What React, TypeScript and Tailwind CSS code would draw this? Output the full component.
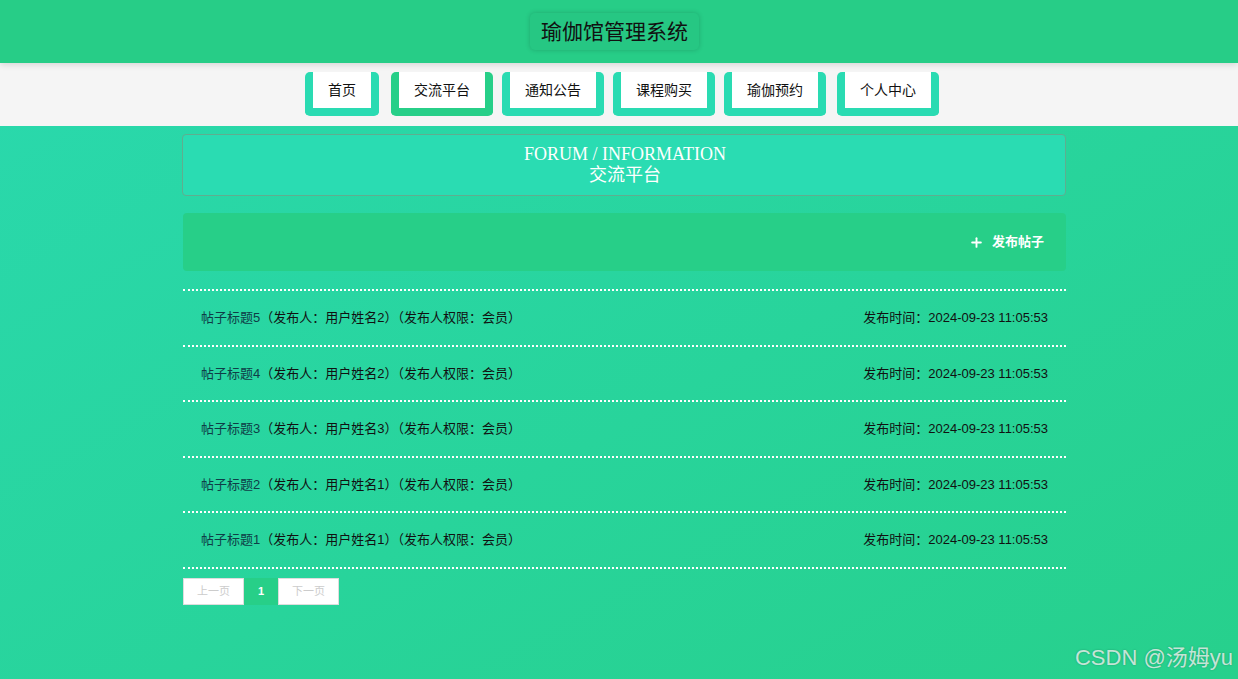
import { Plus } from "lucide-react";

const navItems = [
  { label: "首页", gap: "ml-0" },
  { label: "交流平台", gap: "ml-[12px]" },
  { label: "通知公告", gap: "ml-[9px]" },
  { label: "课程购买", gap: "ml-[9px]" },
  { label: "瑜伽预约", gap: "ml-[9px]" },
  { label: "个人中心", gap: "ml-[11px]" },
];

const posts = [
  { title: "帖子标题5", name: "用户姓名2" },
  { title: "帖子标题4", name: "用户姓名2" },
  { title: "帖子标题3", name: "用户姓名3" },
  { title: "帖子标题2", name: "用户姓名1" },
  { title: "帖子标题1", name: "用户姓名1" },
];

const sans = "font-['Liberation_Sans','Noto_Sans_CJK_SC',sans-serif]";

export default function App() {
  return (
    <div
      className={`relative min-h-screen bg-gradient-to-br from-[#2ad9ae] to-[#27d08c] ${sans}`}
    >
      {/* 顶部标题 */}
      <header className="relative z-10 flex h-[63px] items-center justify-center bg-[#27cd87] shadow-[0_2px_6px_rgba(0,0,0,0.12)]">
        <div className="mr-[9px] rounded-[5px] bg-[#26c783] px-[11px] py-[5px] text-[21px] leading-[27px] text-[#111] shadow-[0_0_5px_rgba(0,0,0,0.18)]">
          瑜伽馆管理系统
        </div>
      </header>

      {/* 导航 */}
      <nav className="flex h-[63px] items-start bg-[#f5f5f5] pl-[305px] pt-[9px]">
        {navItems.map((item) => (
          <div
            key={item.label}
            className={`${item.gap} rounded-[5px] border-x-[8px] border-b-[8px] ${
              item.label === "交流平台" ? "border-[#27cf88]" : "border-[#2adbb2]"
            }`}
          >
            <div className="bg-white px-[15px] text-[14px] leading-[36px] text-[#111]">
              {item.label}
            </div>
          </div>
        ))}
      </nav>

      <main className="ml-[182px] w-[884px] pt-[8px]">
        {/* 栏目标题 */}
        <div className="flex h-[62px] flex-col items-center justify-center rounded-[4px] border border-[#5fae8f] bg-[#2adcb2] pl-[2px] font-['Liberation_Serif','Noto_Sans_CJK_SC',serif] text-white">
          <div className="text-[18px] leading-[19px]">FORUM / INFORMATION</div>
          <div className="text-[18px] leading-[22px]">交流平台</div>
        </div>

        {/* 操作栏 */}
        <div className="mt-[17px] ml-[1px] flex h-[58px] items-center justify-end rounded-[4px] bg-[#27cf88] pr-[22px]">
          <button className="flex items-center gap-[8px] text-[13px] font-bold text-white">
            <Plus className="h-[15px] w-[15px]" strokeWidth={3} />
            发布帖子
          </button>
        </div>

        {/* 帖子列表 */}
        <ul className="mt-[18px] ml-[1px] border-t-2 border-dotted border-white">
          {posts.map((p) => (
            <li
              key={p.title}
              className="flex h-[55.6px] items-center justify-between border-b-2 border-dotted border-white px-[18px] text-[13px] text-[#111]"
            >
              <span>
                <span className="text-[#0f3d47]">{p.title}</span>（发布人：{p.name}）（发布人权限：会员）
              </span>
              <span>发布时间：2024-09-23 11:05:53</span>
            </li>
          ))}
        </ul>

        {/* 分页 */}
        <div className="mt-[9px] ml-[1px] flex h-[27px] text-[11px]">
          <button className="w-[61px] border border-[#dddddd] bg-white text-[#cccccc]">上一页</button>
          <button className="w-[34px] bg-[#27cf88] font-bold text-white">1</button>
          <button className="w-[61px] border border-[#dddddd] bg-white text-[#cccccc]">下一页</button>
        </div>
      </main>

      {/* 水印 */}
      <div className="absolute bottom-[5px] right-[5px] text-[22px] text-[#e4efe9]/85 [text-shadow:0_0_2px_rgba(0,0,0,0.25)]">
        CSDN @汤姆yu
      </div>
    </div>
  );
}
